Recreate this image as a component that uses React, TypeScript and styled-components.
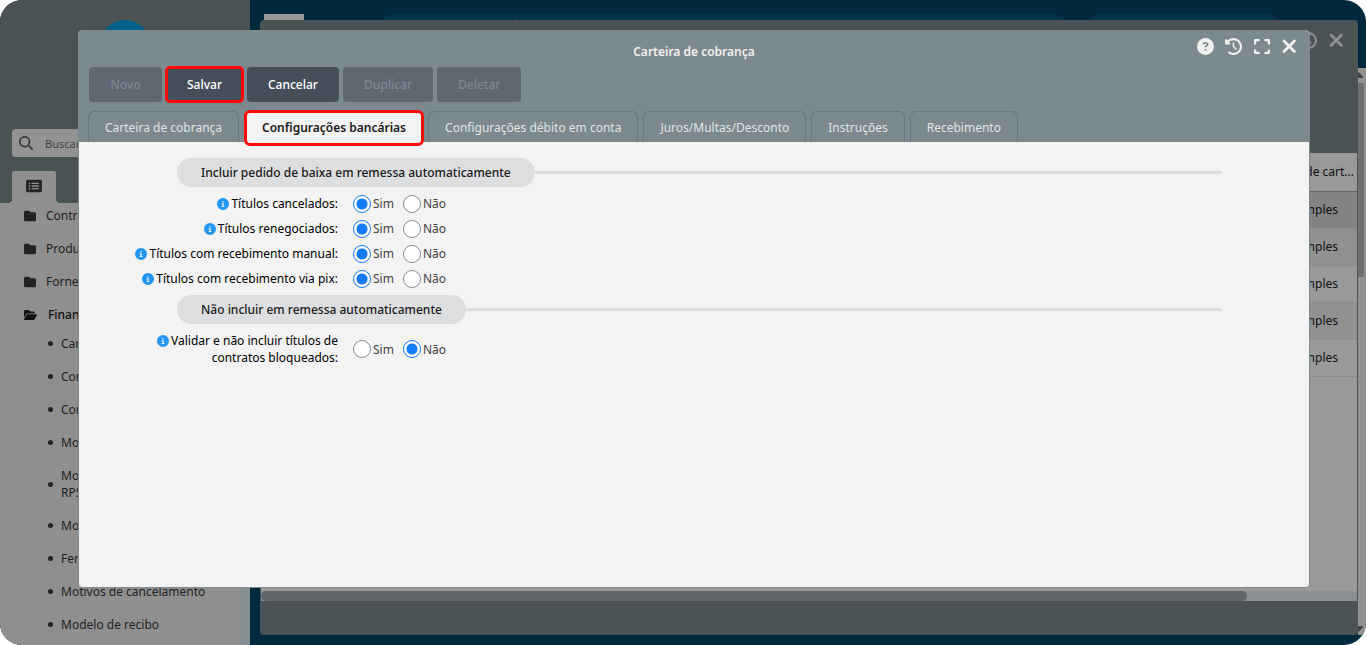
import React from "react";
import styled, { createGlobalStyle, css } from "styled-components";
import {
  FaCaretDown,
  FaCaretUp,
  FaCircleInfo,
  FaCircleQuestion,
  FaClockRotateLeft,
  FaFolder,
  FaFolderOpen,
  FaMagnifyingGlass,
  FaRectangleList,
} from "react-icons/fa6";

const GlobalStyle = createGlobalStyle`
  * { box-sizing: border-box; }
  body {
    margin: 0;
    background: #fff;
    font-family: "Noto Sans", "Open Sans", sans-serif;
    font-size: 12px;
    line-height: 17px;
    color: #1a1a1a;
  }
  button, input { font: inherit; }
  ul { list-style: none; margin: 0; padding: 0; }
`;

const Page = styled.div`
  position: relative;
  display: flex;
  height: 100vh;
  min-height: 600px;
  overflow: hidden;
  border-radius: 22px;
  background: #00293e;
`;

/* Sidebar */
const Sidebar = styled.aside`
  display: flex;
  flex-direction: column;
  width: 250px;
  flex: none;
  background: #4a5254;
`;
const Brand = styled.div`
  height: 129px;
  padding: 20px 0 0 100px;
  flex: none;
`;
const Logo = styled.div`
  width: 50px;
  height: 50px;
  border-radius: 50%;
  background: #00608c;
`;
const Search = styled.label`
  display: flex;
  align-items: center;
  gap: 12px;
  flex: none;
  height: 28px;
  margin: 0 12px 14px;
  padding: 0 7px;
  border-radius: 4px;
  background: #939393;
  color: #383c3e;
  svg { width: 14px; height: 14px; }
  input {
    width: 160px;
    padding: 0;
    border: 0;
    background: none;
    font-size: 11px;
    color: #444;
  }
  input::placeholder { color: #444; opacity: 1; }
`;
const SideTab = styled.button`
  position: relative;
  display: flex;
  align-items: center;
  justify-content: center;
  width: 44px;
  height: 32px;
  flex: none;
  margin: 0 12px;
  padding: 0 0 2px;
  border: 0;
  border-radius: 2px 2px 0 0;
  background: #8f8f8f;
  color: #262626;
  &::before, &::after {
    content: "";
    position: absolute;
    bottom: 0;
    width: 4px;
    height: 4px;
  }
  &::before {
    right: 100%;
    background: radial-gradient(circle at 0 0, #4a5254 4px, #8f8f8f 4px);
  }
  &::after {
    left: 100%;
    background: radial-gradient(circle at 100% 0, #4a5254 4px, #8f8f8f 4px);
  }
`;
const Menu = styled.nav`
  flex: 1;
  overflow: hidden;
  border-right: 10px solid #868e90;
  background: #8f8f8f;
  color: #222;
`;
const Folder = styled.a<{ $open?: boolean }>`
  display: flex;
  align-items: center;
  gap: ${(p) => (p.$open ? 11 : 10)}px;
  height: 33px;
  padding-left: 24px;
  text-decoration: none;
  color: ${(p) => (p.$open ? "#111" : "inherit")};
  font-weight: ${(p) => (p.$open ? 500 : 400)};
  svg { width: ${(p) => (p.$open ? 13 : 12)}px; height: 12px; }
`;
const FolderList = styled.ul`
  margin-top: -4px;
`;
const Leaf = styled.a`
  display: flex;
  align-items: center;
  gap: 8px;
  padding: 8px 30px 8px 48px;
  text-decoration: none;
  color: inherit;
  &::before {
    content: "";
    width: 5px;
    height: 5px;
    flex: none;
    border-radius: 50%;
    background: #222;
  }
`;

/* Workspace behind the dialog */
const Workspace = styled.main`
  display: flex;
  flex-direction: column;
  flex: 1;
  min-width: 0;
  padding: 14px 8px 10px 10px;
`;
const TopTabs = styled.div`
  display: flex;
  gap: 16px;
  height: 6px;
  flex: none;
  overflow: hidden;
  padding: 0 76px 0 4px;
`;
const ActiveTopTab = styled.div`
  width: 40px;
  flex: none;
  margin-right: 58px;
  background: #999;
`;
const TopBand = styled.div<{ $grow: number }>`
  display: flex;
  flex: ${(p) => p.$grow} 1 0;
  height: 34px;
  border-radius: 17px;
  background: #003349;
`;
const TopBandLead = styled.div`
  width: 20%;
  border-right: 1px solid #0c3d54;
`;
const BackWindow = styled.section`
  display: flex;
  flex-direction: column;
  flex: 1;
  min-height: 0;
  border-radius: 4px;
  background: #4a5254;
`;
const BackHeader = styled.header`
  display: flex;
  justify-content: flex-end;
  gap: 11px;
  height: 133px;
  flex: none;
  padding: 12px 13px;
  color: #8e8e8e;
`;
const BackBody = styled.div`
  flex: 1;
  overflow: hidden;
  margin: 0 1px;
  background: #999;
`;
const Grid = styled.table`
  width: 100%;
  border-collapse: collapse;
  color: #111;
  th {
    height: 38px;
    padding: 0 3px;
    border-bottom: 1px solid #5c6668;
    font-weight: 400;
    text-align: right;
  }
  td {
    height: 37px;
    padding: 0 19px;
    border-bottom: 1px solid #8b8b8b;
    text-align: right;
  }
  tr:nth-child(even) td { background: #919191; }
  tr:first-child td { background: #838383; }
`;
const HScroll = styled.div`
  height: 10px;
  flex: none;
  margin: 0 1px;
  background: #8a9093;
`;
const HThumb = styled.div`
  width: 90%;
  height: 10px;
  border-radius: 5px;
  background: #5f6568;
`;
const BackFooter = styled.footer`
  height: 34px;
  flex: none;
`;
const VScroll = styled.div`
  position: absolute;
  top: 68px;
  right: 0;
  bottom: 10px;
  width: 8px;
  display: flex;
  flex-direction: column;
  overflow: hidden;
  background: #919191;
  color: #444;
`;
const VThumb = styled.div`
  width: 6px;
  height: 194px;
  background: #707070;
`;
const Arrow = styled.span<{ $down?: boolean }>`
  display: block;
  height: 15px;
  margin: ${(p) => (p.$down ? "auto" : 0)} 0 0 -8px;
  line-height: 0;
`;

/* Dialog */
const Dialog = styled.section`
  position: absolute;
  top: 30px;
  left: 78px;
  right: 56px;
  bottom: 57px;
  display: flex;
  flex-direction: column;
  overflow: hidden;
  border: 1px solid #7c898e;
  border-radius: 4px;
  background: #f3f3f3;
`;
const DialogHead = styled.header`
  flex: none;
  background: #7c898e;
`;
const TitleBar = styled.div`
  display: grid;
  grid-template-columns: 1fr auto 1fr;
  height: 36px;
  color: #f0f0f0;
`;
const Title = styled.h1`
  grid-column: 2;
  margin: 12px 0 0;
  font-size: 12px;
  line-height: 17px;
  font-weight: 600;
`;
const WindowTools = styled.div`
  display: flex;
  justify-content: flex-end;
  gap: 11px;
  padding: 6px 11px 0 0;
`;
const Tool = styled.button`
  display: flex;
  align-items: center;
  justify-content: center;
  width: 17px;
  height: 19px;
  padding: 0;
  border: 0;
  background: none;
  color: #f0f0f0;
`;
const Actions = styled.div`
  display: flex;
  gap: 4px;
  padding: 0 10px;
`;
const highlight = css`
  outline: 3px solid #fe0a0a;
`;
const ActionButton = styled.button<{ $marked?: boolean }>`
  min-width: 73px;
  height: 35px;
  padding: 0 21px;
  border: 0;
  border-radius: 4px;
  background: #454f5a;
  color: #fff;
  font-weight: 500;
  &:disabled { background: #606771; color: #7f8791; }
  ${(p) => p.$marked && css`
    ${highlight}
    outline-offset: -2px;
  `}
`;
const Tabs = styled.div`
  display: flex;
  gap: 5px;
  padding: 9px 9px 0;
`;
const Tab = styled.button<{ $active?: boolean }>`
  height: 31px;
  padding: 0 16px;
  border: 1px solid #69777f;
  border-bottom: 0;
  border-radius: 6px 6px 0 0;
  background: none;
  color: #e1e5e6;
  ${(p) => p.$active && css`
    ${highlight}
    outline-offset: -2px;
    position: relative;
    height: 34px;
    margin: 0 0 -3px 1px;
    padding: 0 17px 2px;
    border: 0;
    border-radius: 5px;
    background: #f3f3f3;
    color: #1a1a1a;
    font-weight: 600;
  `}
`;
const Form = styled.form`
  padding: 16px 87px 0 98px;
`;
const Section = styled.fieldset`
  margin: 0 0 4px;
  padding: 0;
  border: 0;
`;
const Legend = styled.legend`
  display: flex;
  align-items: center;
  width: 100%;
  padding: 0 0 4px;
  font-weight: 500;
  &::after {
    content: "";
    flex: 1;
    height: 3px;
    border-radius: 0 2px 2px 0;
    background: #dfdfdf;
  }
`;
const Pill = styled.span`
  padding: 6px 24px;
  border-radius: 15px;
  background: #dddee0;
`;
const Field = styled.div`
  display: flex;
  align-items: center;
  gap: 15px;
  margin-left: -60px;
`;
const FieldLabel = styled.div`
  width: 221px;
  flex: none;
  padding: 4px 0;
  color: #000;
  text-align: right;
  svg { width: 12px; height: 12px; margin-right: 2px; vertical-align: -2px; color: #2196f3; }
`;
const Options = styled.div`
  display: flex;
  gap: 9px;
`;
const Option = styled.label`
  display: flex;
  align-items: center;
  gap: 2px;
  color: #444;
`;
const Radio = styled.input`
  appearance: none;
  width: 18px;
  height: 18px;
  margin: 0;
  border: 1px solid #868c95;
  border-radius: 50%;
  background: #fff;
  &:checked {
    border-color: #147cf9;
    background: radial-gradient(circle, #147cf9 5px, #fff 6px);
  }
`;

const CloseIcon = () => (
  <svg width="17" height="17" viewBox="0 0 17 17" fill="none" stroke="currentColor" strokeWidth="2.8" strokeLinecap="round">
    <path d="M3 3 13.4 13.4M13.4 3 3 13.4" />
  </svg>
);

const ExpandIcon = () => (
  <svg width="17" height="17" viewBox="0 0 17 17" fill="none" stroke="currentColor" strokeWidth="2.2" strokeLinejoin="round">
    <path d="M6.5 2.1H2.1V6.5M11.5 2.1H15.9V6.5M15.9 11.5V14.9H11.5M6.5 14.9H2.1V11.5" />
  </svg>
);

const leaves = [
  "Carteira cobrança",
  "Contas a receber",
  "Contas a pagar",
  "Motivos de baixa",
  "Modelo de impressão de RPS",
  "Modelo de carnê",
  "Feriados",
  "Motivos de cancelamento",
  "Modelo de recibo",
];

type RowProps = { name: string; label: string; value?: "sim" | "nao" };
const RadioRow = ({ name, label, value = "sim" }: RowProps) => (
  <Field role="radiogroup" aria-labelledby={name}>
    <FieldLabel id={name}><FaCircleInfo />{label}</FieldLabel>
    <Options>
      <Option><Radio type="radio" name={name} defaultChecked={value === "sim"} />Sim</Option>
      <Option><Radio type="radio" name={name} defaultChecked={value === "nao"} />Não</Option>
    </Options>
  </Field>
);

export default function App() {
  return (
    <Page>
      <GlobalStyle />
      <Sidebar>
        <Brand><Logo /></Brand>
        <Search><FaMagnifyingGlass /><input placeholder="Buscar" aria-label="Buscar" /></Search>
        <SideTab aria-label="Menu"><FaRectangleList size={16} /></SideTab>
        <Menu>
          <FolderList>
            {["Contratos", "Produtos", "Fornecedores"].map((f) => (
              <li key={f}><Folder href="#"><FaFolder />{f}</Folder></li>
            ))}
            <li>
              <Folder href="#" $open><FaFolderOpen />Financeiro</Folder>
              <FolderList>
                {leaves.map((l) => <li key={l}><Leaf href="#">{l}</Leaf></li>)}
              </FolderList>
            </li>
          </FolderList>
        </Menu>
      </Sidebar>
      <Workspace>
        <TopTabs>
          <ActiveTopTab />
          <TopBand $grow={7}><TopBandLead /></TopBand>
          <TopBand $grow={2} />
        </TopTabs>
        <BackWindow>
          <BackHeader><FaClockRotateLeft size={17} /><CloseIcon /></BackHeader>
          <BackBody>
            <Grid>
              <thead><tr><th>Tipo de cart...</th></tr></thead>
              <tbody>{[1, 2, 3, 4, 5].map((r) => <tr key={r}><td>Simples</td></tr>)}</tbody>
            </Grid>
          </BackBody>
          <HScroll><HThumb /></HScroll>
          <BackFooter />
        </BackWindow>
      </Workspace>
      <VScroll>
        <Arrow><FaCaretUp size={16} /></Arrow>
        <VThumb />
        <Arrow $down><FaCaretDown size={16} /></Arrow>
      </VScroll>
      <Dialog role="dialog" aria-labelledby="dialog-title">
        <DialogHead>
          <TitleBar>
            <Title id="dialog-title">Carteira de cobrança</Title>
            <WindowTools>
              <Tool aria-label="Ajuda"><FaCircleQuestion size={17} /></Tool>
              <Tool aria-label="Histórico"><FaClockRotateLeft size={17} /></Tool>
              <Tool aria-label="Expandir"><ExpandIcon /></Tool>
              <Tool aria-label="Fechar"><CloseIcon /></Tool>
            </WindowTools>
          </TitleBar>
          <Actions>
            <ActionButton disabled>Novo</ActionButton>
            <ActionButton $marked>Salvar</ActionButton>
            <ActionButton>Cancelar</ActionButton>
            <ActionButton disabled>Duplicar</ActionButton>
            <ActionButton disabled>Deletar</ActionButton>
          </Actions>
          <Tabs role="tablist">
            <Tab role="tab">Carteira de cobrança</Tab>
            <Tab role="tab" aria-selected $active>Configurações bancárias</Tab>
            <Tab role="tab">Configurações débito em conta</Tab>
            <Tab role="tab">Juros/Multas/Desconto</Tab>
            <Tab role="tab">Instruções</Tab>
            <Tab role="tab">Recebimento</Tab>
          </Tabs>
        </DialogHead>
        <Form>
          <Section>
            <Legend><Pill>Incluir pedido de baixa em remessa automaticamente</Pill></Legend>
            <RadioRow name="cancelados" label="Títulos cancelados:" />
            <RadioRow name="renegociados" label="Títulos renegociados:" />
            <RadioRow name="manual" label="Títulos com recebimento manual:" />
            <RadioRow name="pix" label="Títulos com recebimento via pix:" />
          </Section>
          <Section>
            <Legend><Pill>Não incluir em remessa automaticamente</Pill></Legend>
            <RadioRow name="bloqueados" label="Validar e não incluir títulos de contratos bloqueados:" value="nao" />
          </Section>
        </Form>
      </Dialog>
    </Page>
  );
}
